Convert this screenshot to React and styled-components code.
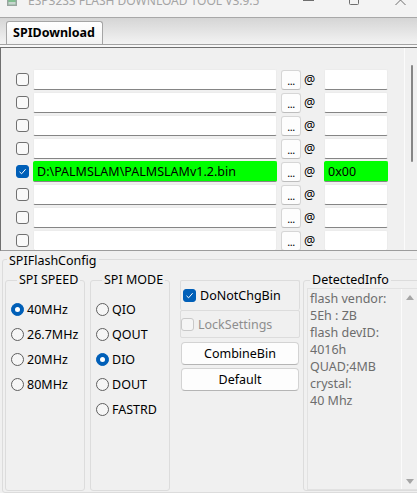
import React from "react";
import styled, { createGlobalStyle } from "styled-components";

const GlobalStyle = createGlobalStyle`
  html, body { margin: 0; padding: 0; background: #f0f0f0; }
  body { font-family: "Noto Sans", "Open Sans", sans-serif; font-size: 12.5px; color: #000; }
  *, *::before, *::after { box-sizing: border-box; }
`;

const Window = styled.div`
  width: 417px;
  height: 493px;
  overflow: hidden;
  background: #f0f0f0;
  display: flex;
  flex-direction: column;
`;

/* ---------- title bar ---------- */
const TitleBar = styled.div`
  flex: none;
  height: 17px;
  background: #f3f3f3;
  display: flex;
  align-items: flex-start;
  overflow: hidden;
`;
const AppIcon = styled.svg`
  flex: none;
  margin: -5px 0 0 7px;
`;
const TitleText = styled.div`
  flex: 1;
  margin: -6px 0 0 11px;
  font-size: 12px;
  line-height: 14px;
  color: #a4a4a4;
  white-space: nowrap;
`;
const WinControls = styled.div`
  flex: none;
  display: flex;
  margin-right: -6px;
`;
const WinButton = styled.div`
  width: 46px;
  display: flex;
  justify-content: center;
  svg { margin-top: -5px; }
`;

/* ---------- tab strip ---------- */
const TabStrip = styled.div`
  flex: none;
  height: 28px;
  border-top: 1px solid #a8a8a8;
  border-bottom: 1px solid #a3a3a3;
  background: linear-gradient(#d5d5d5, #f3f3f3);
  display: flex;
  align-items: flex-end;
  padding-left: 6px;
`;
const Tab = styled.div`
  width: 97px;
  height: 23px;
  border: 1px solid #a5a5a5;
  border-bottom: none;
  border-radius: 3px 3px 0 0;
  background: linear-gradient(#ffffff, #f2f2f2);
  font-weight: bold;
  font-size: 12.5px;
  line-height: 21px;
  padding-left: 6px;
  white-space: nowrap;
`;
const TabGap = styled.div`
  flex: none;
  height: 2px;
  background: #f8f8f8;
`;

/* ---------- file list ---------- */
const FileArea = styled.div`
  flex: none;
  position: relative;
  height: 204px;
  border-top: 1px solid #6f6f6f;
  border-left: 1px solid #6f6f6f;
  border-bottom: 1px solid #9c9c9c;
  padding: 21px 0 0 15px;
  overflow: hidden;
`;
const Rows = styled.div`
  display: flex;
  flex-direction: column;
  gap: 2px;
`;
const Row = styled.div`
  display: flex;
  align-items: center;
  height: 21px;
  flex: none;
`;
const CheckBox = styled.span`
  flex: none;
  width: 13px;
  height: 13px;
  border-radius: 3px;
  border: 1px solid ${(p) => (p.$checked ? "#005fb8" : p.$disabled ? "#c9c9c9" : "#707070")};
  background: ${(p) => (p.$checked ? "#005fb8" : p.$disabled ? "#f5f5f5" : "#f9f9f9")};
  display: flex;
  align-items: center;
  justify-content: center;
  margin-right: ${(p) => p.$gap || 4}px;
`;
const Field = styled.div`
  flex: none;
  width: ${(p) => p.$w}px;
  height: 21px;
  background: ${(p) => (p.$ok ? "#00ff00" : "#ffffff")};
  border: 1px solid ${(p) => (p.$ok ? "#00ff00" : "#ececec")};
  border-bottom: 1px solid #858585;
  border-radius: 2px;
  padding-left: 3px;
  line-height: 19px;
  white-space: nowrap;
  overflow: hidden;
  margin-right: ${(p) => p.$mr || 0}px;
`;
const DotsButton = styled.div`
  flex: none;
  width: 20px;
  height: 20px;
  border: 1px solid #d6d6d6;
  border-bottom-color: #bdbdbd;
  border-radius: 3px;
  background: #fdfdfd;
  text-align: center;
  font-size: 11px;
  line-height: 20px;
  letter-spacing: -0.5px;
  margin-right: 3px;
`;
const At = styled.span`
  flex: none;
  width: 20px;
  font-size: 12.5px;
  line-height: 21px;
`;
const ListScroll = styled.div`
  position: absolute;
  top: 0;
  bottom: 0;
  right: 0;
  width: 13px;
  border-left: 1px solid #fbfbfb;
`;
const ListThumb = styled.div`
  position: absolute;
  top: 17px;
  left: 6px;
  width: 2px;
  height: 97px;
  border-radius: 1px;
  background: #868686;
`;

/* ---------- config ---------- */
const Config = styled.div`
  flex: 1;
  padding-left: 2px;
`;
const Group = styled.fieldset`
  margin: 0;
  min-width: 0;
  border: 1px solid #dcdcdc;
  border-radius: 3px;
  padding: ${(p) => p.$pad || "0"};
  width: ${(p) => (p.$w ? `${p.$w}px` : "auto")};
  flex: none;
  margin-left: ${(p) => p.$ml || 0}px;
`;
const Legend = styled.legend`
  padding: ${(p) => (p.$top ? "3px 2px 0" : "0 2px")};
  margin-left: ${(p) => p.$ml || 0}px;
  line-height: ${(p) => (p.$top ? 13 : 16)}px;
  font-size: 12.5px;
  white-space: nowrap;
`;
const OuterGroup = styled(Group)`
  width: 430px;
`;
const GroupRow = styled.div`
  display: flex;
  height: 219px;
  align-items: stretch;
`;
const RadioList = styled.div`
  display: flex;
  flex-direction: column;
`;
const RadioItem = styled.label`
  display: flex;
  align-items: center;
  height: 25px;
  white-space: nowrap;
`;
const Radio = styled.span`
  flex: none;
  width: 13px;
  height: 13px;
  border-radius: 50%;
  border: 1px solid ${(p) => (p.$checked ? "#005fb8" : "#5f5f5f")};
  background: ${(p) => (p.$checked ? "#005fb8" : "#f6f6f6")};
  display: flex;
  align-items: center;
  justify-content: center;
  margin-right: 3px;
  &::after {
    content: "";
    display: ${(p) => (p.$checked ? "block" : "none")};
    width: 5px;
    height: 5px;
    border-radius: 50%;
    background: #fff;
  }
`;
const Column = styled.div`
  flex: none;
  width: 120px;
  margin-left: 10px;
  padding-top: 8px;
  display: flex;
  flex-direction: column;
`;
const OptionBox = styled.div`
  height: ${(p) => p.$h}px;
  border: 1px solid #dcdcdc;
  border-bottom-width: ${(p) => (p.$open ? 0 : 1)}px;
  border-radius: 2px;
  display: flex;
  align-items: center;
  padding-left: ${(p) => p.$pl}px;
  color: ${(p) => (p.$disabled ? "#8e8e8e" : "#000")};
  white-space: nowrap;
`;
const PushButton = styled.div`
  height: ${(p) => p.$h}px;
  margin: ${(p) => p.$mt}px 1px 0 1px;
  border: 1px solid #d3d3d3;
  border-bottom-color: #b5b5b5;
  border-radius: 4px;
  background: #fdfdfd;
  display: flex;
  align-items: center;
  justify-content: center;
`;
const InfoGroup = styled(Group)`
  width: 120px;
  display: flex;
  flex-direction: column;
`;
const InfoText = styled.div`
  position: relative;
  flex: 1;
  margin-left: 3px;
  border: 1px solid #e2e2e2;
  border-right: none;
  background: #f0f0f0;
  color: #6d6d6d;
  padding: 1px 0 0 2px;
  line-height: 17px;
  white-space: pre;
`;
const InfoScroll = styled.div`
  position: absolute;
  top: 0;
  bottom: 0;
  left: 93px;
  width: 17px;
  border-left: 1px solid #fbfbfb;
  display: flex;
  flex-direction: column;
  justify-content: space-between;
  align-items: center;
  padding: 6px 0 5px 0;
`;

const Check = () => (
  <svg width="9" height="9" viewBox="0 0 9 9">
    <path d="M1.5 4.8 L3.6 6.8 L7.6 2.2" fill="none" stroke="#fff" strokeWidth="1" />
  </svg>
);

const rows = [
  {}, {}, {}, {},
  { checked: true, path: "D:\\PALMSLAM\\PALMSLAMv1.2.bin", offset: "0x00", ok: true },
  {}, {}, {}, {},
];

const speeds = [
  { label: "40MHz", checked: true },
  { label: "26.7MHz" },
  { label: "20MHz" },
  { label: "80MHz" },
];
const modes = [
  { label: "QIO" },
  { label: "QOUT" },
  { label: "DIO", checked: true },
  { label: "DOUT" },
  { label: "FASTRD" },
];

const info = "flash vendor:\n5Eh : ZB\nflash devID:\n4016h\nQUAD;4MB\ncrystal:\n40 Mhz";

export default function App() {
  return (
    <Window>
      <GlobalStyle />
      <TitleBar>
        <AppIcon width="10" height="11" viewBox="0 0 10 11">
          <rect x="0" y="0" width="10" height="11" fill="#9aa4a0" />
          <rect x="1.5" y="1.5" width="7" height="8" fill="#7fbf8f" />
          <rect x="1.5" y="7" width="7" height="2.5" fill="#c8d6cf" />
        </AppIcon>
        <TitleText>ESP32S3 FLASH DOWNLOAD TOOL V3.9.5</TitleText>
        <WinControls>
          <WinButton>
            <svg width="11" height="10" viewBox="0 0 11 10">
              <path d="M0 5.5 H11" stroke="#6e6e6e" strokeWidth="1" />
            </svg>
          </WinButton>
          <WinButton>
            <svg width="10" height="10" viewBox="0 0 10 10">
              <rect x="0.5" y="0.5" width="9" height="9" rx="1" fill="none" stroke="#6e6e6e" strokeWidth="1" />
            </svg>
          </WinButton>
          <WinButton>
            <svg width="11" height="10" viewBox="0 0 11 10">
              <path d="M0.5 0 L10.5 10 M10.5 0 L0.5 10" stroke="#6e6e6e" strokeWidth="1" />
            </svg>
          </WinButton>
        </WinControls>
      </TitleBar>

      <TabStrip>
        <Tab>SPIDownload</Tab>
      </TabStrip>
      <TabGap />

      <FileArea>
        <Rows>
          {rows.map((r, i) => (
            <Row key={i}>
              <CheckBox $checked={r.checked}>{r.checked && <Check />}</CheckBox>
              <Field $w={244} $mr={4} $ok={r.ok}>{r.path || ""}</Field>
              <DotsButton>...</DotsButton>
              <At>@</At>
              <Field $w={64} $ok={r.ok}>{r.offset || ""}</Field>
            </Row>
          ))}
        </Rows>
        <ListScroll>
          <ListThumb />
        </ListScroll>
      </FileArea>

      <Config>
        <OuterGroup $pad="5px 0 1px 2px">
          <Legend $top $ml={2}>SPIFlashConfig</Legend>
          <GroupRow>
            <Group $w={80} $pad="9px 0 0 5px">
              <Legend $ml={6}>SPI SPEED</Legend>
              <RadioList>
                {speeds.map((s) => (
                  <RadioItem key={s.label}>
                    <Radio $checked={s.checked} />
                    {s.label}
                  </RadioItem>
                ))}
              </RadioList>
            </Group>
            <Group $w={80} $ml={5} $pad="9px 0 0 5px">
              <Legend $ml={6}>SPI MODE</Legend>
              <RadioList>
                {modes.map((s) => (
                  <RadioItem key={s.label}>
                    <Radio $checked={s.checked} />
                    {s.label}
                  </RadioItem>
                ))}
              </RadioList>
            </Group>
            <Column>
              <OptionBox $h={30} $pl={2} $open>
                <CheckBox $checked>
                  <Check />
                </CheckBox>
                DoNotChgBin
              </OptionBox>
              <OptionBox $h={28} $pl={0} $disabled>
                <CheckBox $disabled />
                LockSettings
              </OptionBox>
              <PushButton $h={23} $mt={4}>CombineBin</PushButton>
              <PushButton $h={23} $mt={3}>Default</PushButton>
            </Column>
            <InfoGroup $ml={3} $pad="0 0 0 0">
              <Legend $ml={6}>DetectedInfo</Legend>
              <InfoText>
                {info}
                <InfoScroll>
                  <svg width="8" height="5" viewBox="0 0 8 5">
                    <path d="M0 5 L4 0 L8 5 Z" fill="#a6a6a6" />
                  </svg>
                  <svg width="8" height="5" viewBox="0 0 8 5">
                    <path d="M0 0 L8 0 L4 5 Z" fill="#a6a6a6" />
                  </svg>
                </InfoScroll>
              </InfoText>
            </InfoGroup>
          </GroupRow>
        </OuterGroup>
      </Config>
    </Window>
  );
}
